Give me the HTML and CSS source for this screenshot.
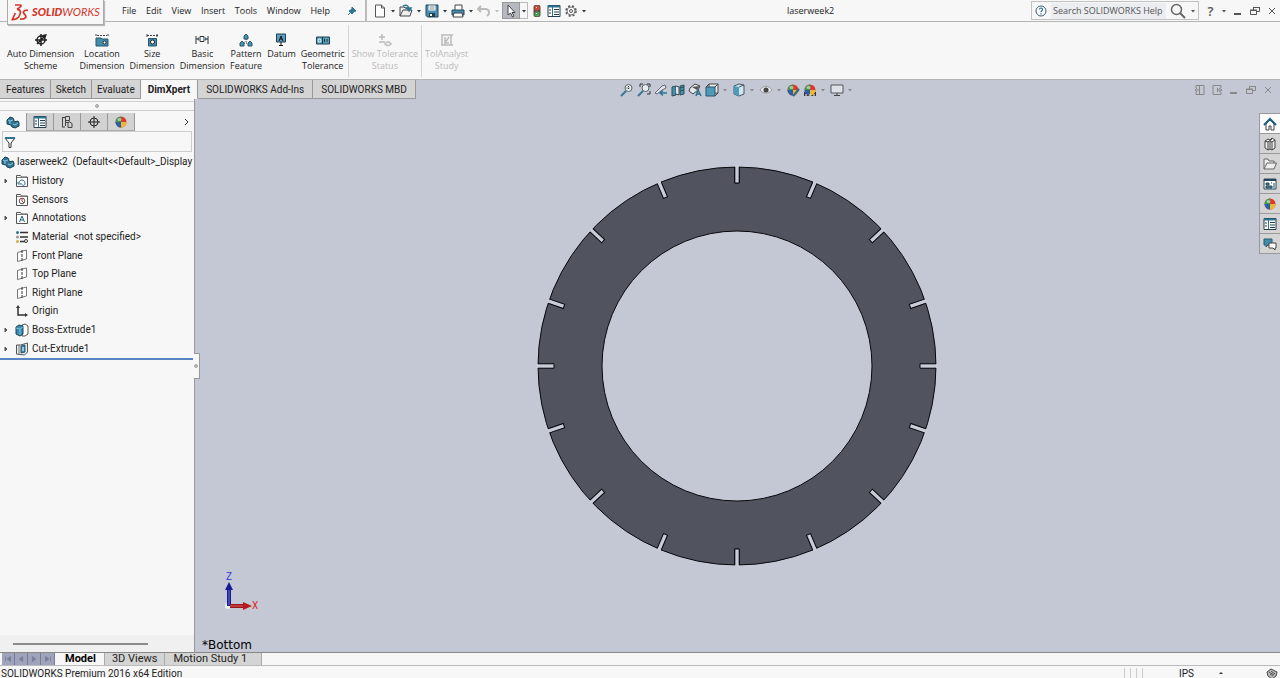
FILE: index.html
```html
<!DOCTYPE html>
<html lang="en">
<head>
<meta charset="utf-8">
<title>laserweek2</title>
<link rel="stylesheet" href="styles.css">
</head>
<body>
<svg class="defs" aria-hidden="true">
  <defs>
    <symbol id="part" viewBox="0 0 14 14"><path d="M1 5l3-3 3 1 1 2v2l4-1 1 2v3l-4 2-3-1-1-2-4-1z" fill="#2f7795" stroke="#174257"/><path d="M2 5l2 1 3-1M7 9l2 1 3-2M4 6v3" stroke="#93c4d8" fill="none"/></symbol>
    <symbol id="list" viewBox="0 0 14 14"><path d="M1 1.500h12v11H1z" fill="#fff" stroke="#263e4d"/><path d="M1 2.500h12" stroke="#2e7492" stroke-width="2"/><path d="M5.500 3v9" stroke="#2e7492"/><path d="M2 6h2M2 9h2M7 5.500h5M7 8h5M7 10.500h5" stroke="#263e4d"/></symbol>
    <symbol id="ball" viewBox="0 0 14 14"><circle cx="7" cy="7" r="5.500" fill="#d93a2e"/><path d="M7 1.500A5.500 5.500 0 0 0 1.500 7L7 7z" fill="#3e9a4c"/><path d="M1.500 7A5.500 5.500 0 0 0 7 12.500L7 7z" fill="#285fa6"/><path d="M7 7h5.500A5.500 5.500 0 0 1 7 12.500z" fill="#e9b92f"/><ellipse cx="5.500" cy="4.500" rx="2" ry="1.500" fill="#fff" opacity=".5"/></symbol>
    <symbol id="minus" viewBox="0 0 12 12"><path d="M2 9h7" stroke="currentColor" stroke-width="2"/></symbol>
    <symbol id="restore" viewBox="0 0 12 12"><path d="M1.500 5.500h6v4h-6zM4.500 5V2.500h6v4H8" fill="none" stroke="currentColor"/><path d="M1 5h7M4 2.500h7" stroke="currentColor"/></symbol>
    <symbol id="close" viewBox="0 0 12 12"><path d="M3 3l6 6M9 3l-6 6" stroke="currentColor" fill="none"/></symbol>
    <symbol id="down" viewBox="0 0 6 6"><path d="M1 2h4L3 4.500z" fill="currentColor"/></symbol>
    <symbol id="expand" viewBox="0 0 6 6"><path d="M2 1l2 2-2 2z" fill="currentColor" stroke="currentColor"/></symbol>
    <symbol id="plane" viewBox="0 0 14 14"><path d="M2.500 3.500L11.500 1v9l-9 2.500z" fill="#fff" stroke="#777"/><path d="M7 1v12" stroke="#333" stroke-dasharray="3 1"/></symbol>
    <symbol id="folder" viewBox="0 0 14 14"><path d="M1.500 12.500v-11h4l1 1.500h6v9.500z" fill="#fff" stroke="#555"/><path d="M2 3.500h10" stroke="#777"/></symbol>
    <symbol id="lens" viewBox="0 0 14 14"><circle cx="8.500" cy="5" r="3.500" fill="#e9edf2" stroke="#566"/><path d="M6 8l-5 5" stroke="#3c7794" stroke-width="2"/></symbol>
  </defs>
</svg>

<header class="titlebar">
  <div class="logo">
    <svg class="logo-mark" viewBox="4 2 54 54" aria-hidden="true"><path d="M16 8h16c6 0 0 8-10 12M22 21c14 0 12 13 5 23-5 6-13 8-19 8l9-20M55 24c-14-2-17 6-10 12 8 8 2 16-14 14" fill="none" stroke="#d3352b" stroke-width="5"/></svg>
    <span class="logo-text"><b>SOLID</b>WORKS</span>
  </div>
  <nav class="menu">
    <button>File</button><button>Edit</button><button>View</button><button>Insert</button><button>Tools</button><button>Window</button><button>Help</button>
  </nav>
  <button class="pin" aria-label="Pin menu"><svg viewBox="0 0 10 10"><path d="M5 1l4 4-2 .5L5 8 2 5l3-2zM3.500 6.500L1 9" fill="#2e7492" stroke="#2e7492"/></svg></button>
  <div class="quick">
    <button aria-label="New"><svg viewBox="0 0 14 14"><path d="M2.500 1h6l3 3v9h-9z" fill="#fff" stroke="#555"/><path d="M8.500 1v3h3" fill="none" stroke="#555"/></svg></button><button class="drop" aria-label="New options"><svg><use href="#down"/></svg></button>
    <button aria-label="Open"><svg viewBox="0 0 14 14"><path d="M1 12V3h4l1 1h4v3M1 12l3-6h9l-2 6z" fill="#eee" stroke="#444"/><path d="M4 2c4-2 6 0 6 4M7.500 4L10 7l2-3z" fill="none" stroke="#2e7492" stroke-width="1.500"/></svg></button><button class="drop" aria-label="Open options"><svg><use href="#down"/></svg></button>
    <button aria-label="Save"><svg viewBox="0 0 14 14"><path d="M1 1h12v12H2.500L1 11.500z" fill="#4790ae" stroke="#24485b"/><path d="M3.500 1.500h7v5h-7z" fill="#fff"/><path d="M4 9h6v4H4z" fill="#263c48"/><path d="M5 10h2v2H5z" fill="#fff"/><path d="M4.500 3h5M4.500 5h5" stroke="#888"/></svg></button><button class="drop" aria-label="Save options"><svg><use href="#down"/></svg></button>
    <button aria-label="Print"><svg viewBox="0 0 14 14"><path d="M4 6V1h7v5" fill="#fff" stroke="#444"/><path d="M1 6h12v5H1z" fill="#438cab" stroke="#24485b"/><path d="M3 9h8l1 4H2z" fill="#fff" stroke="#444"/></svg></button><button class="drop" aria-label="Print options"><svg><use href="#down"/></svg></button>
    <button class="dim" aria-label="Undo"><svg viewBox="0 0 14 14"><path d="M4 2L1 5l3 3M2 5h6c5 0 5 5 2 7" fill="none" stroke="currentColor" stroke-width="2"/></svg></button><button class="drop dim" aria-label="Undo options"><svg><use href="#down"/></svg></button>
    <button class="selected" aria-label="Select"><svg viewBox="0 0 14 14"><path d="M4 1v10l2.500-2 2 4 1.500-1-2-3.500h3z" fill="#fff" stroke="#444"/></svg></button><button class="drop boxed" aria-label="Select options"><svg><use href="#down"/></svg></button>
    <button class="wide" aria-label="Rebuild"><svg viewBox="0 0 14 14"><rect x="3.500" y="1" width="7" height="12" rx="2" fill="#5c5048"/><circle cx="7" cy="4" r="2.500" fill="#e14437"/><circle cx="7" cy="10" r="2.500" fill="#46a856"/><path d="M6 3.500h1M6 9.500h1" stroke="#fff"/></svg></button>
    <button class="wide" aria-label="File properties"><svg><use href="#list"/></svg></button>
    <button class="wide" aria-label="Options"><svg viewBox="0 0 14 14"><circle cx="7" cy="7" r="5" fill="none" stroke="#555" stroke-width="1.500" stroke-dasharray="2 2"/><circle cx="7" cy="7" r="4" fill="#fff" stroke="#777"/><circle cx="7" cy="7" r="1.500" fill="none" stroke="#555"/></svg></button><button class="drop" aria-label="Options list"><svg><use href="#down"/></svg></button>
  </div>
  <h1 class="doc-title">laserweek2</h1>
  <form class="search">
    <svg class="help-icon" viewBox="0 0 12 12" aria-hidden="true"><circle cx="6" cy="6" r="5" fill="#fff" stroke="#3b5c6d"/><path d="M4.500 4.500c0-2 3-2 3 0C7.500 6 6 6 6 7.300M6 8.200v1.200" fill="none" stroke="#26708f" stroke-width="1.200"/></svg>
    <input type="text" placeholder="Search SOLIDWORKS Help" aria-label="Search SOLIDWORKS Help">
    <button type="button" class="find" aria-label="Search"><svg viewBox="0 0 16 16"><circle cx="6.500" cy="6.500" r="5" fill="none" stroke="#666" stroke-width="1.500"/><path d="M10 10l5 5" stroke="#666" stroke-width="2"/></svg></button><button type="button" class="drop" aria-label="Search options"><svg><use href="#down"/></svg></button>
  </form>
  <div class="win">
    <button class="question">?</button><button class="drop" aria-label="Help options"><svg><use href="#down"/></svg></button>
    <button aria-label="Minimize"><svg><use href="#minus"/></svg></button><button aria-label="Restore"><svg><use href="#restore"/></svg></button><button aria-label="Close"><svg><use href="#close"/></svg></button>
  </div>
</header>

<section class="ribbon">
  <div class="group">
    <button><svg viewBox="0 0 14 14"><circle cx="7" cy="7" r="4" fill="none" stroke="#222" stroke-width="1.500"/><path d="M1 7h12M7 1v12M3 11l8-8" stroke="#222" stroke-width="1.500"/><path d="M8 2l5-1-2 5z" fill="#222"/></svg>Auto Dimension<br>Scheme</button>
    <button><svg viewBox="0 0 14 14"><path d="M1 5h5l1 1h6v7H1z" fill="#438cab" stroke="#25586f"/><path d="M1 1v3M13 1v3M2 2.500h10" stroke="#444" stroke-dasharray="2 1"/><circle cx="9.500" cy="9.500" r="1.500" fill="#fff" stroke="#222"/></svg>Location<br>Dimension</button>
    <button><svg viewBox="0 0 14 14"><path d="M3.500 5.500h8v7.500h-8z" fill="#438cab" stroke="#25586f"/><path d="M2 2.500h11" stroke="#444" stroke-dasharray="2 1"/><path d="M2 1v3M12 1v3" stroke="#444"/><circle cx="7.500" cy="9" r="2" fill="#fff" stroke="#222"/></svg>Size<br>Dimension</button>
    <button><svg viewBox="0 0 14 14"><path d="M1 3v8M13 3v8M1 6h3M10 6h3" stroke="#333"/><path d="M2 6l2-2v4zM12 6l-2-2v4z" fill="#2e7492"/><path d="M5 3.500h4v5H5z" fill="#fff" stroke="#333"/></svg>Basic<br>Dimension</button>
    <button><svg viewBox="0 0 14 14"><g fill="#4b93b0" stroke="#25586f"><path d="M5 6V3l2-2 2 2v3zM1 13v-3l2-2 2 2v3zM9 13v-3l2-2 2 2v3z"/></g><path d="M7 6v4M5 10h4" stroke="#333" stroke-dasharray="1 1"/></svg>Pattern<br>Feature</button>
    <button><svg viewBox="0 0 14 14"><path d="M2.500 1h9v8h-9z" fill="#5a9fbb" stroke="#204052"/><path d="M5 8l2-5 2 5M6 6h2M7 9v3M5 12.500h4" fill="none" stroke="#111"/></svg>Datum<br>&nbsp;</button>
    <button><svg viewBox="0 0 14 14"><path d="M.500 4h13v7H.500z" fill="#5a9fbb" stroke="#204052"/><circle cx="3.500" cy="7.500" r="1.500" fill="none" stroke="#fff"/><path d="M6.500 4v7M8.500 6v3M11 6v3" stroke="#183747"/></svg>Geometric<br>Tolerance</button>
  </div>
  <div class="group">
    <button disabled><svg viewBox="0 0 14 14"><path d="M1 4h6M4 1v6M1 9h6M7 11c2-3 4-3 6 0-2 2-4 2-6 0z" fill="none" stroke="currentColor" stroke-width="1.500"/></svg>Show Tolerance<br>Status</button>
  </div>
  <div class="group last">
    <button disabled><svg viewBox="0 0 14 14"><path d="M1 2h12M1 12h12M2 2v10M5 4v6l4-6M5 10h4M11 2v10" fill="none" stroke="currentColor" stroke-width="1.500"/></svg>TolAnalyst<br>Study</button>
  </div>
</section>

<main class="workspace">
  <nav class="tabs">
    <button>Features</button><button>Sketch</button><button>Evaluate</button><button class="active">DimXpert</button><button class="roomy">SOLIDWORKS Add-Ins</button><button class="roomy">SOLIDWORKS MBD</button>
  </nav>

  <aside class="panel">
    <div class="grip"><i></i></div>
    <div class="panel-tabs">
      <button class="active" aria-label="Feature tree"><svg><use href="#part"/></svg></button>
      <button aria-label="Properties"><svg><use href="#list"/></svg></button>
      <button aria-label="Configurations"><svg viewBox="0 0 14 14"><path d="M2.500 2v10M2 2.500h3M2 12h3M5.500 1.500h4v4h-4zM5.500 5v6M6 7.500h3M9 6.500l3 2v4H8v-4z" fill="none" stroke="#444"/></svg></button>
      <button aria-label="DimXpert manager"><svg viewBox="0 0 14 14"><circle cx="7" cy="7" r="4" fill="none" stroke="#222"/><path d="M1 7h12M7 1v12" stroke="#222"/></svg></button>
      <button aria-label="Display manager"><svg><use href="#ball"/></svg></button>
      <button class="more" aria-label="More tabs"><svg viewBox="0 0 8 10"><path d="M2 2l3 3-3 3" fill="none" stroke="#333"/></svg></button>
    </div>
    <label class="filter"><svg viewBox="0 0 12 12" aria-hidden="true"><path d="M1 2h10L7 7v4.500H5V7z" fill="#fff" stroke="#333"/><path d="M1 2h10" stroke="#2e7492" stroke-width="2"/></svg><input type="text" aria-label="Filter"></label>
    <ul class="tree">
      <li class="root"><svg><use href="#part"/></svg>laserweek2&nbsp; (Default&lt;&lt;Default&gt;_Display</li>
      <li><svg class="arrow"><use href="#expand"/></svg><svg viewBox="0 0 14 14"><use href="#folder"/><path d="M4 9c0-4 6-4 6 0s-4 2-4 0M3 8v2h3" fill="none" stroke="#2e7492"/></svg>History</li>
      <li><i class="arrow"></i><svg viewBox="0 0 14 14"><use href="#folder"/><circle cx="7" cy="8" r="2.800" fill="none" stroke="#555"/><path d="M7 5v3l2 2" stroke="#c33" fill="none"/></svg>Sensors</li>
      <li><svg class="arrow"><use href="#expand"/></svg><svg viewBox="0 0 14 14"><use href="#folder"/><path d="M4.500 11L7 5l2.500 6M5.500 9h3" fill="none" stroke="#26607d"/></svg>Annotations</li>
      <li><i class="arrow"></i><svg viewBox="0 0 14 14"><path d="M5 2.500h8M5 7h8M5 11.500h5" stroke="#333" stroke-width="1.500"/><circle cx="2.500" cy="2.500" r="1.500" fill="#2e7492"/><circle cx="2.500" cy="7" r="1.500" fill="#999"/><circle cx="2.500" cy="11.500" r="1.500" fill="#d6a83c"/><circle cx="11" cy="11" r="1.500" fill="#fff" stroke="#333"/></svg>Material&nbsp; &lt;not specified&gt;</li>
      <li><i class="arrow"></i><svg><use href="#plane"/></svg>Front Plane</li>
      <li><i class="arrow"></i><svg><use href="#plane"/></svg>Top Plane</li>
      <li><i class="arrow"></i><svg><use href="#plane"/></svg>Right Plane</li>
      <li><i class="arrow"></i><svg viewBox="0 0 14 14"><path d="M3 3v8h8" fill="none" stroke="#333" stroke-width="1.500"/><path d="M1 4l2-3 2 3zM10 9l3 2-3 2z" fill="#333"/></svg>Origin</li>
      <li><svg class="arrow"><use href="#expand"/></svg><svg viewBox="0 0 14 14"><path d="M7 2l3-1 3 2v8l-3 2H7z" fill="#fff" stroke="#555"/><path d="M1 4l3-2 4 1v8l-3 2-4-2z" fill="#398baf" stroke="#174257"/><path d="M1 5l4 1 3-2M5 6v6" fill="none" stroke="#7fc0da"/></svg>Boss-Extrude1</li>
      <li><svg class="arrow"><use href="#expand"/></svg><svg viewBox="0 0 14 14"><path d="M1.500 3h4l7-2v9l-3 3-8-1z" fill="#eee" stroke="#555"/><path d="M4 3v9" stroke="#777"/><path d="M6 4v7l4-1V3z" fill="#398baf" stroke="#25586f"/><path d="M8 5v4" stroke="#fff"/></svg>Cut-Extrude1</li>
    </ul>
    <div class="rollback"></div>
    <div class="hscroll"><i></i></div>
    <div class="splitter"><i></i></div>
  </aside>

  <section class="viewport">
    <div class="view-tools">
      <button aria-label="Zoom to fit"><svg viewBox="0 0 14 14"><use href="#lens"/><path d="M8.500 3v4M6.500 5h4" stroke="#333" stroke-dasharray="1 1"/></svg></button>
      <button aria-label="Zoom to area"><svg viewBox="0 0 14 14"><use href="#lens"/><path d="M3 4V1h3M10 1h3v3M13 8v3h-3" fill="none" stroke="#333"/></svg></button>
      <button aria-label="Previous view"><svg viewBox="0 0 14 14"><path d="M1 10l7-7 3-1 1 3-4 2-5 4z" fill="#e4e7eb" stroke="#667"/><path d="M6 10h7M9 7.500L6 10l3 2.500" fill="none" stroke="#2e7492" stroke-width="1.500"/></svg></button>
      <button aria-label="Section view"><svg viewBox="0 0 14 14"><path d="M1 4l4-1v9l-4 1zM9 3l4-1v9l-4 1z" fill="#4891ae" stroke="#334b58"/><path d="M5 3l3 1v8l-3-1M9 5l4-1M9 8l4-1" fill="#dfe6eb" stroke="#334b58"/></svg></button>
      <button aria-label="View style"><svg viewBox="0 0 14 14"><path d="M2 5l5-4 5 2-2 4-5 4-4-3z" fill="#e4e7eb" stroke="#444"/><path d="M4 4l5 3 3-4z" fill="#555"/><path d="M8 13l2-6 3 6M9 11h3" fill="none" stroke="#2e7492" stroke-width="1.500"/></svg></button>
      <button aria-label="View orientation"><svg viewBox="0 0 14 14"><path d="M4 4V1h9v9h-3" fill="#e8ebef" stroke="#444"/><path d="M1 4h9v9H1z" fill="#4e9abb" stroke="#2d5568"/><path d="M1 4l3-3M10 4l3-3M10 13l3-3" stroke="#444"/></svg></button><button class="drop" aria-label="Orientation options"><svg><use href="#down"/></svg></button>
      <button aria-label="Display style"><svg viewBox="0 0 14 14"><path d="M2 3l5-2 5 1v9l-5 2-5-2z" fill="#d6e4eb" stroke="#3a5868"/><path d="M2 3l5 1v9l-5-2z" fill="#4e9abb"/><path d="M7 4l5-2" stroke="#3a5868"/></svg></button><button class="drop" aria-label="Display options"><svg><use href="#down"/></svg></button>
      <button aria-label="Hide or show items"><svg viewBox="0 0 14 14"><path d="M1 7c3-5 9-5 12 0-3 4-9 4-12 0z" fill="#e4e6eb" stroke="#999"/><circle cx="7" cy="7" r="2.500" fill="#444"/></svg></button><button class="drop" aria-label="Visibility options"><svg><use href="#down"/></svg></button>
      <button aria-label="Edit appearance"><svg viewBox="0 0 14 14"><use href="#ball"/><path d="M13 6l-5 6-1 1" stroke="#2e6a85" stroke-width="2"/></svg></button>
      <button aria-label="Apply scene"><svg viewBox="0 0 14 14"><path d="M1 9h12v4H1z" fill="#333"/><use href="#ball"/><path d="M2 12h10" stroke="#fff" stroke-dasharray="2 2"/></svg></button><button class="drop" aria-label="Scene options"><svg><use href="#down"/></svg></button>
      <button aria-label="View settings"><svg viewBox="0 0 14 14"><path d="M1 2h12v8H1z" fill="#dde1e8" stroke="#555"/><path d="M7 10v2.500M4 12.500h6" stroke="#444"/></svg></button><button class="drop" aria-label="View settings options"><svg><use href="#down"/></svg></button>
    </div>

    <div class="doc-win">
      <button aria-label="Dock left"><svg viewBox="0 0 12 12"><path d="M2 4V1.500h8v9H2V8M5.500 1v10M1 6h4M3 4L1 6l2 2" fill="none" stroke="currentColor"/></svg></button>
      <button aria-label="Dock right"><svg viewBox="0 0 12 12"><path d="M10 4V1.500H2v9h8V8M6.500 4v4M7 6h3M8 4l3 2-3 2" fill="none" stroke="currentColor"/></svg></button>
      <button aria-label="Minimize document"><svg><use href="#minus"/></svg></button>
      <button aria-label="Restore document"><svg><use href="#restore"/></svg></button>
      <button aria-label="Close document"><svg><use href="#close"/></svg></button>
    </div>

    <svg class="model" viewBox="-201 -201 402 402" role="img" aria-label="Slotted ring, bottom view">
      <defs>
        <g id="slot"><path d="M-2-201h4v18h-4z" fill="#c8ccd8"/><path d="M-2.200-199v16h4.400V-199" fill="none" stroke="#08080c"/></g>
        <g id="quarter"><use href="#slot"/><use href="#slot" transform="rotate(23)"/><use href="#slot" transform="rotate(47)"/><use href="#slot" transform="rotate(71)"/></g>
      </defs>
      <path d="M-199 0a199 199 0 1 0 398 0a199 199 0 1 0-398 0zM-135 0a135 135 0 1 0 270 0a135 135 0 1 0-270 0z" fill="#51535e" fill-rule="evenodd" stroke="#08080c"/>
      <use href="#quarter"/><use href="#quarter" transform="scale(-1 1)"/><use href="#quarter" transform="scale(1 -1)"/><use href="#quarter" transform="scale(-1 -1)"/>
      <use href="#slot" transform="rotate(90)"/><use href="#slot" transform="rotate(-90)"/>
    </svg>

    <div class="triad">
      <span class="z">Z</span>
      <svg viewBox="0 0 28 28" aria-hidden="true"><circle cx="4" cy="24" r="3" fill="#e9f5e5"/><path d="M5 24V7" stroke="#171994" stroke-width="4"/><path d="M5 23V8" stroke="#7478d4"/><path d="M1 8L5 0l4 8z" fill="#171994"/><path d="M6 24h14" stroke="#9c1518" stroke-width="4"/><path d="M6 24h14" stroke="#e06060"/><path d="M19 20l9 4-9 4z" fill="#b51b1e"/></svg>
      <span class="x">X</span>
    </div>
    <div class="view-name">*Bottom</div>

    <nav class="task-pane">
      <button class="active" aria-label="Home"><svg viewBox="0 0 14 14"><path d="M3 7v6h3V9h2v4h3V7L7 3z" fill="#fff" stroke="#444"/><path d="M1 8l6-6 6 6" fill="none" stroke="#1e5d7c" stroke-width="2"/></svg></button>
      <button aria-label="Design library"><svg viewBox="0 0 14 14"><path d="M2 4l3-2 2 1 2-2 3 2v8l-3 2-2-1-2 1-3-2z" fill="#eee" stroke="#444"/><path d="M5 5v8M7 4v8M9 5v8M2 4l3 1 4-3M7 4l2 1 3-2" fill="none" stroke="#444"/></svg></button>
      <button aria-label="File explorer"><svg viewBox="0 0 14 14"><path d="M1 12V2h4l1 2h5v2M1 12l3-6h9.500L11 12z" fill="#eee" stroke="#666"/></svg></button>
      <button aria-label="View palette"><svg viewBox="0 0 14 14"><path d="M1 2h12v10H1z" fill="#fff" stroke="#24485b"/><path d="M1 3h12" stroke="#24485b" stroke-width="2"/><path d="M3 6h3v2H3zM3 9h6v2H3zM8 6h1M11 6v5" fill="#438cab" stroke="#24485b"/></svg></button>
      <button aria-label="Appearances"><svg><use href="#ball"/></svg></button>
      <button aria-label="Custom properties"><svg><use href="#list"/></svg></button>
      <button aria-label="Forum"><svg viewBox="0 0 14 14"><path d="M1 2h8v6H5l-2 2V8H1z" fill="#438cab" stroke="#285c74"/><path d="M6 6h7v5h-1v2l-2-2H6z" fill="#fff" stroke="#444"/></svg></button>
    </nav>
  </section>
</main>

<nav class="sheets">
  <div class="nav-buttons">
    <button aria-label="First"><svg viewBox="0 0 12 12"><path d="M3 3v6M9 3L5 6l4 3z" fill="currentColor" stroke="currentColor"/></svg></button>
    <button aria-label="Previous"><svg viewBox="0 0 12 12"><path d="M8 3L4 6l4 3z" fill="currentColor" stroke="currentColor"/></svg></button>
    <button aria-label="Next"><svg viewBox="0 0 12 12"><path d="M4 3l4 3-4 3z" fill="currentColor" stroke="currentColor"/></svg></button>
    <button aria-label="Last"><svg viewBox="0 0 12 12"><path d="M9 3v6M3 3l4 3-4 3z" fill="currentColor" stroke="currentColor"/></svg></button>
  </div>
  <button class="sheet active">Model</button><button class="sheet">3D Views</button><button class="sheet long">Motion Study 1</button>
</nav>

<footer class="status">
  <span>SOLIDWORKS Premium 2016 x64 Edition</span>
  <div class="cells"><i></i><i></i><i></i><i></i></div>
  <span class="units">IPS</span>
  <svg class="up" viewBox="0 0 6 6" aria-hidden="true"><path d="M1 4h4L3 2z" fill="#333"/></svg>
  <svg class="tag" viewBox="0 0 12 12" aria-hidden="true"><path d="M1 4l4-3 6 3-1 4-4 3-4-3z" fill="#bbb" stroke="#444"/><path d="M3 4l5 3M5 3l4 3M4 6l3 2" stroke="#555"/></svg>
</footer>
</body>
</html>
```

FILE: styles.css
```css
* { box-sizing: border-box; }

body {
  margin: 0;
  height: 100vh;
  display: flex;
  flex-direction: column;
  overflow: hidden;
  background: #f7f7f7;
  color: #222;
  font: 10px/12px Roboto, "Noto Sans", sans-serif;
}

button, input {
  margin: 0;
  padding: 0;
  border: 0;
  background: none;
  color: inherit;
  font: inherit;
}

button {
  display: flex;
  align-items: center;
  justify-content: center;
  white-space: nowrap;
}

svg { width: 14px; height: 14px; flex: none; display: block; }
.defs { position: absolute; width: 0; height: 0; }
.drop svg { width: 6px; height: 6px; }

/* Title bar */
.titlebar, .ribbon { font: 9px/12px "Open Sans", "Noto Sans", sans-serif; }

.titlebar {
  display: flex;
  align-items: center;
  height: 22px;
  border-bottom: 1px solid #b4b4b4;
}

.logo {
  display: flex;
  align-items: center;
  align-self: flex-start;
  gap: 3px;
  width: 97px;
  height: 25px;
  margin-left: 7px;
  padding-left: 3px;
  z-index: 1;
  background: #f7f7f7;
  border: 1px solid #aaa;
  border-top: 0;
  box-shadow: 1px 1px 1px #bbb;
  color: #d3352b;
}
.logo-mark { width: 18px; height: 18px; }
.logo-text { font: italic 11px/14px Lato, sans-serif; }
.logo-text b { font-weight: 900; }

.menu { display: flex; width: 208px; margin-left: 18px; justify-content: space-between; }
.pin { margin-left: 17px; }
.pin svg { width: 10px; height: 10px; }

.quick {
  display: flex;
  align-items: center;
  height: 21px;
  margin-left: 8px;
  padding-left: 5px;
  border-left: 2px solid #bbb;
}
.quick button { width: 16px; height: 17px; }
.quick .drop { width: 10px; color: #333; }
.quick .dim { color: #bbb; }
.quick .selected { width: 18px; background: #b5b9bf; border: 1px solid #999; }
.quick .boxed { width: 8px; border: 1px solid #bbb; border-left: 0; }
.quick .wide { width: 17px; }

.doc-title { flex: 1; margin: 0; padding-left: 198px; font-size: 9px; font-weight: 400; }

.search {
  display: flex;
  align-items: center;
  width: 168px;
  height: 19px;
  padding-left: 3px;
  border: 1px solid #c2c2c2;
}
.help-icon { width: 12px; height: 12px; }
.search input {
  flex: 1;
  min-width: 0;
  height: 16px;
  margin-left: 4px;
  padding-left: 2px;
  background: #ebedf1;
}
.search input::placeholder { color: #555; opacity: 1; }
.find { width: 20px; margin-left: 2px; }
.find svg { width: 16px; height: 16px; }
.search .drop { width: 10px; color: #555; }

.win { display: flex; align-items: center; color: #555; }
.win button { width: 17px; }
.win .question { font-size: 13px; font-weight: 600; margin-left: 3px; }
.win .drop { width: 10px; }
.win svg { width: 12px; height: 12px; }
.win .drop svg { width: 6px; height: 6px; }

/* Ribbon */
.ribbon {
  display: flex;
  align-items: center;
  height: 58px;
  border-bottom: 1px solid #b4b4b4;
}
.group {
  display: flex;
  align-items: center;
  gap: 5px;
  height: 52px;
  padding: 4px 3px 0 7px;
  border-right: 1px solid #d4d4d4;
}
.group + .group { padding: 4px 3px 0; }
.group.last { border-right: 0; }
.group button { display: block; text-align: center; }
.group svg { margin: 0 auto 1px; }
.group button:disabled { color: #bbb; }

/* Workspace */
.workspace {
  flex: 1;
  min-height: 0;
  display: grid;
  grid-template-columns: 195px 1fr;
  grid-template-rows: 19px 1fr;
  background: #c4c8d4;
}

.tabs {
  grid-area: 1 / 1 / 2 / 3;
  justify-self: start;
  z-index: 1;
  display: flex;
}
.tabs button {
  padding: 1px 5px 0;
  background: #d4d4d4;
  border-right: 1px solid #999;
  border-bottom: 1px solid #999;
}
.tabs button:first-child { padding-left: 6px; }
.tabs button.roomy { padding: 1px 8px 0; }
.tabs button.active {
  padding: 1px 7px 0;
  background: #f7f7f7;
  border-bottom-color: #f7f7f7;
  font-weight: 700;
}

.panel {
  grid-area: 2 / 1 / 3 / 2;
  position: relative;
  display: flex;
  flex-direction: column;
  min-width: 0;
  background: #f7f7f7;
  border-right: 1px solid #999;
}
.grip {
  display: flex;
  align-items: center;
  justify-content: center;
  height: 10px;
  margin-top: 2px;
  border: 1px solid #d0d0d0;
  border-width: 1px 0;
}
.grip i, .splitter i { width: 4px; height: 4px; border-radius: 2px; background: #bbb; border: 1px solid #aaa; }

.panel-tabs { display: flex; height: 20px; padding-top: 2px; }
.panel-tabs button { width: 27px; background: #d2d2d2; border-right: 1px solid #999; border-bottom: 1px solid #aaa; }
.panel-tabs button.active { background: #f7f7f7; border-bottom: 0; }
.panel-tabs .more { width: 14px; margin-left: auto; background: none; border: 0; }
.more svg { width: 8px; height: 10px; }

.filter {
  display: flex;
  align-items: center;
  height: 21px;
  margin: 0 2px;
  border: 1px solid #ccc;
}
.filter svg { width: 12px; height: 12px; margin-left: 1px; }
.filter input { flex: 1; min-width: 0; }

.tree {
  display: flex;
  flex-direction: column;
  height: 206px;
  margin: 0;
  padding: 1px 1px 0 0;
  list-style: none;
}
.tree li {
  flex: 1;
  display: flex;
  align-items: center;
  gap: 3px;
  padding-left: 3px;
  overflow: hidden;
  white-space: nowrap;
}
.tree .root { padding-left: 1px; gap: 2px; }
.tree .arrow { width: 6px; height: 6px; margin-right: 3px; color: #555; flex: none; }

.rollback { height: 2px; margin-right: 1px; background: #5b84c4; }
.hscroll { display: flex; align-items: center; height: 17px; margin-top: auto; background: #f0f0f0; }
.hscroll i { width: 135px; height: 2px; margin-left: 13px; background: #8c8c8c; }
.splitter {
  position: absolute;
  left: 100%;
  top: 254px;
  display: flex;
  align-items: center;
  width: 6px;
  height: 26px;
  z-index: 1;
  background: #f7f7f7;
  border: 1px solid #999;
  border-left: 0;
}

/* Graphics area */
.viewport {
  grid-area: 1 / 2 / 3 / 3;
  position: relative;
  display: grid;
  place-items: center;
  padding-right: 2px;
}
.model { width: 402px; height: 402px; }

.view-tools {
  position: absolute;
  top: 2px;
  left: 0;
  right: 2px;
  display: flex;
  justify-content: center;
  pointer-events: none;
}
.view-tools button { width: 17px; height: 15px; pointer-events: auto; }
.view-tools .drop { width: 10px; color: #888; }

.doc-win { position: absolute; top: 4px; right: 6px; display: flex; gap: 5px; color: #888; }
.doc-win svg { width: 12px; height: 12px; }

.task-pane {
  position: absolute;
  top: 33px;
  right: 0;
  border: 1px solid #999;
  border-width: 1px 0 0 1px;
}
.task-pane button { width: 20px; height: 20px; background: #d4d4d4; border-bottom: 1px solid #999; }
.task-pane .active { background: #fbfbfb; }

.triad { position: absolute; left: 29px; bottom: 42px; display: grid; grid-template-columns: 28px auto; }
.triad svg { width: 28px; height: 28px; }
.triad .z { grid-column: 1 / 3; padding-left: 2px; color: #3434d8; line-height: 10px; }
.triad .x { align-self: end; color: #e02828; line-height: 8px; }
.view-name { position: absolute; left: 7px; bottom: 0; color: #000; font: 12px/14px "DejaVu Sans", sans-serif; }

/* Sheet tabs */
.sheets {
  display: flex;
  height: 14px;
  border: 1px solid #888;
  border-width: 1px 0;
  border-bottom-color: #bbb;
  font-size: 11px;
}
.nav-buttons { display: flex; margin-left: 2px; background: #9fa4bb; color: #777d99; }
.nav-buttons button { width: 13px; border-right: 1px solid #777d99; }
.nav-buttons button:last-child { width: 14px; }
.nav-buttons svg { width: 10px; height: 10px; }
.sheet { padding: 0 7px; background: #d4d4d4; border-right: 1px solid #aaa; }
.sheet.active { padding: 0 8px 0 10px; background: #f7f7f7; color: #000; font-weight: 700; }
.sheet.long { padding: 0 14px 0 8px; }

/* Status bar */
.status { display: flex; height: 12px; padding: 2px 2px 0 1px; }
.status span { white-space: nowrap; line-height: 12px; }
.cells { display: flex; margin-left: auto; }
.cells i { width: 6px; height: 10px; border-left: 1px solid #ccc; }
.units { margin-left: 31px; }
.up { width: 6px; height: 6px; margin: 2px 42px 0 24px; }
.tag { width: 12px; height: 12px; }
```
